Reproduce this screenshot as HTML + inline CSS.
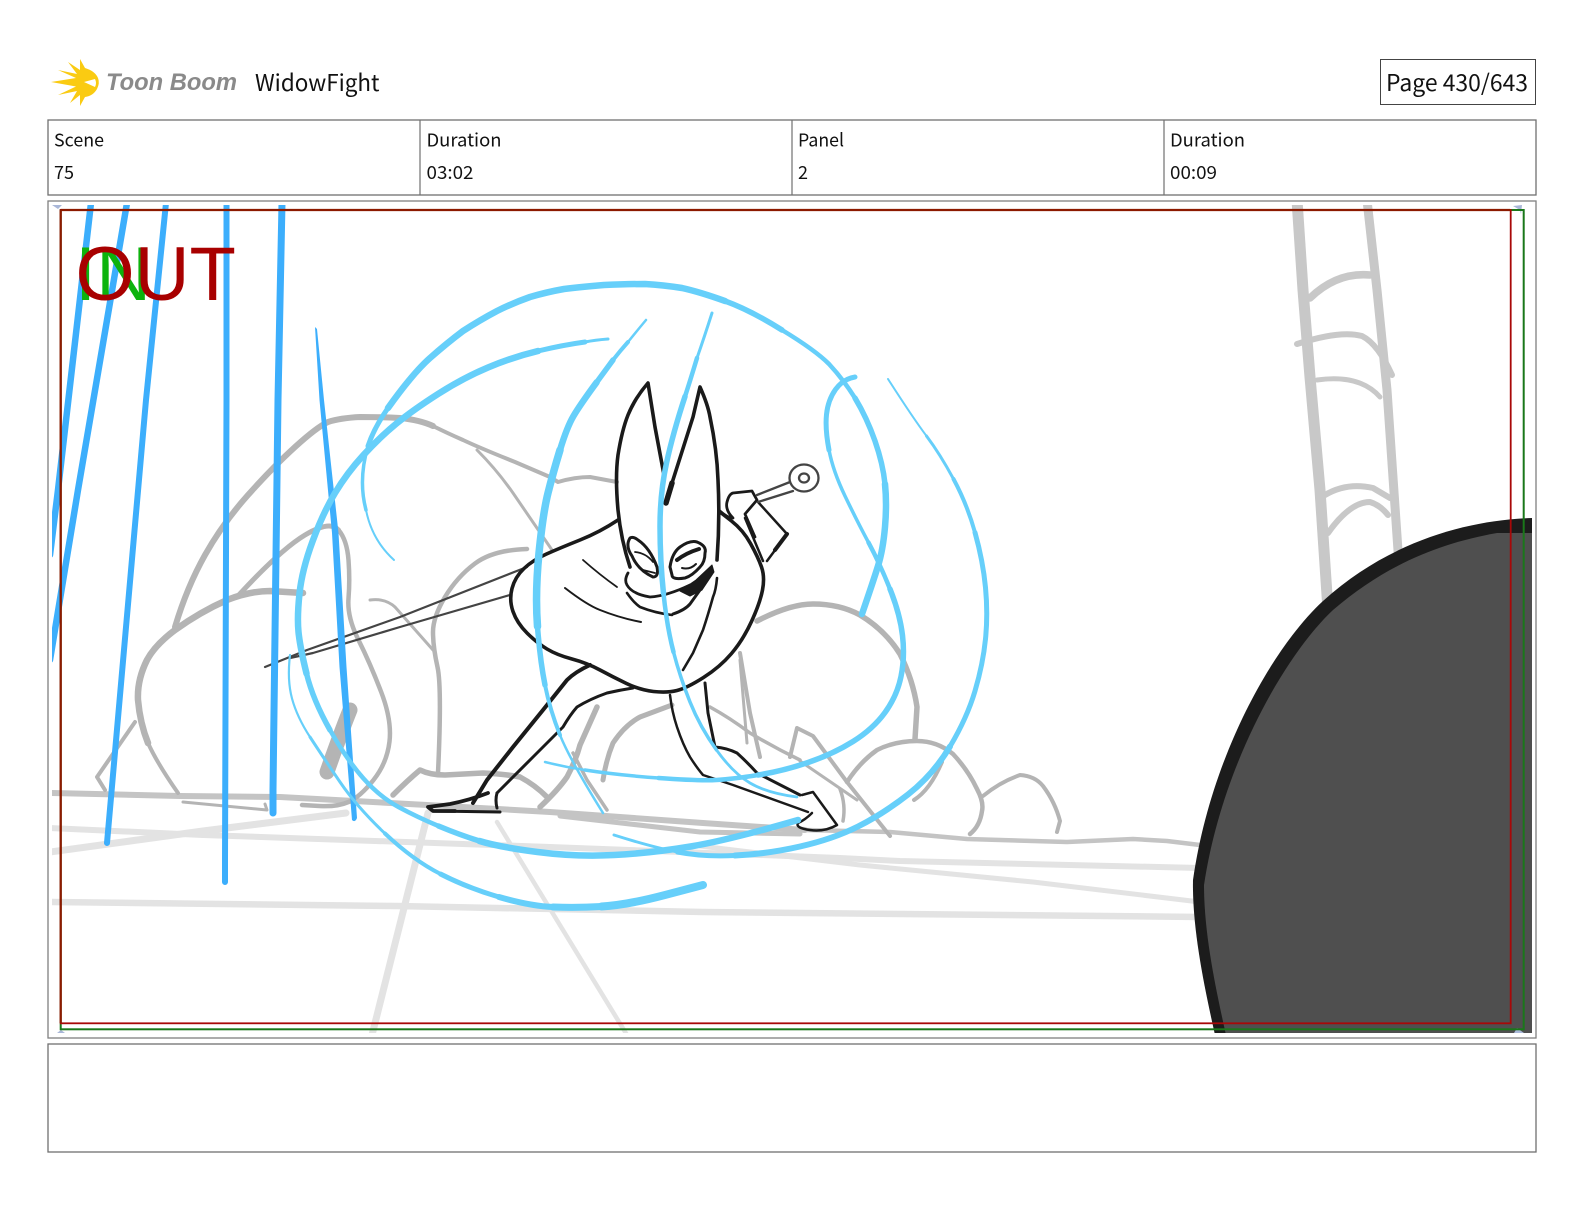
<!DOCTYPE html>
<html><head><meta charset="utf-8"><title>WidowFight</title>
<style>
html,body{margin:0;padding:0;background:#fff;width:1584px;height:1224px;overflow:hidden}
svg{display:block;position:absolute;left:0;top:0}
text{font-family:"Noto Sans CJK JP","Liberation Sans",sans-serif;fill:#111}
.g path{fill:none;stroke-linecap:round;stroke-linejoin:round}
</style></head><body>
<svg width="1584" height="1224" viewBox="0 0 1584 1224" xmlns="http://www.w3.org/2000/svg">
<defs><clipPath id="c"><rect x="52" y="205" width="1480" height="828"/></clipPath></defs>

<!-- logo -->
<path fill="#FACB12" d="M80,59 L85,68 Q95,71 98,78 Q100,83 97,89 Q93,96 85,97 L80,106 L80,95 L70,103 L77,91 L58,95 L76,86.5 L51,82 L76,78 L58,70 L77,74 L68,62 L80,70 Z"/>
<path fill="#fff" d="M84,82 L95,79 Q97,83 95,87 Z"/>
<text x="106" y="90" font-size="24.5" font-weight="700" font-style="italic" textLength="131" lengthAdjust="spacingAndGlyphs" style="font-family:'Liberation Sans',sans-serif;fill:#8a8a8a">Toon Boom</text>
<text x="255" y="91" font-size="23" textLength="124.5" lengthAdjust="spacingAndGlyphs">WidowFight</text>
<rect x="1380.5" y="59.5" width="155" height="45" fill="none" stroke="#444" stroke-width="1"/>
<text x="1386" y="91" font-size="23" textLength="142" lengthAdjust="spacingAndGlyphs">Page 430/643</text>

<!-- table -->
<rect x="48" y="120" width="1488" height="75" fill="none" stroke="#707070" stroke-width="1.3"/>
<path d="M420,120V195M792,120V195M1164,120V195" stroke="#707070" stroke-width="1.2"/>
<g font-size="18">
<text x="54" y="146.5" textLength="50" lengthAdjust="spacingAndGlyphs">Scene</text>
<text x="54" y="179" textLength="20" lengthAdjust="spacingAndGlyphs">75</text>
<text x="426.5" y="146.5" textLength="75" lengthAdjust="spacingAndGlyphs">Duration</text>
<text x="426.5" y="179" textLength="47" lengthAdjust="spacingAndGlyphs">03:02</text>
<text x="798" y="146.5" textLength="46" lengthAdjust="spacingAndGlyphs">Panel</text>
<text x="798" y="179" textLength="10" lengthAdjust="spacingAndGlyphs">2</text>
<text x="1170" y="146.5" textLength="75" lengthAdjust="spacingAndGlyphs">Duration</text>
<text x="1170" y="179" textLength="47" lengthAdjust="spacingAndGlyphs">00:09</text>
</g>

<!-- frames -->
<rect x="48" y="201" width="1488" height="837" fill="none" stroke="#808080" stroke-width="1.3"/>
<rect x="48" y="1044" width="1488" height="108" fill="none" stroke="#707070" stroke-width="1.3"/>

<g clip-path="url(#c)" class="g">
<!-- light gray ground lines -->
<g stroke="#E3E3E3">
<path stroke-width="7" d="M50,852 L203,831 L346,813"/>
<path stroke-width="6" d="M50,828 L203,835 L550,847 L840,858 L900,861 L1200,868"/>
<path stroke-width="5" d="M700,846 L860,865 L1033,882 L1200,902"/>
<path stroke-width="6.5" d="M50,902 L397,906 L703,912 L1200,917"/>
<path stroke-width="7" stroke-linecap="butt" d="M428,813 L372,1035"/>
<path stroke-width="4.5" stroke-linecap="butt" d="M497,822 L627,1035"/>
</g>
<!-- ground -->
<g stroke="#C4C4C4">
<path stroke-width="6" d="M50,793 L180,796 L280,797 L427,805 L550,812 L703,823 L805,830"/>
<path stroke-width="4.5" d="M805,830 L890,832 L967,839 L1067,842 L1133,839 L1167,841 L1200,845"/>
<path stroke-width="5" d="M560,816 L700,832 L800,834"/>
</g>
<!-- ladder -->
<g stroke="#C8C8C8">
<path stroke-width="11" stroke-linecap="butt" d="M1297,200 L1303,290 L1310,377 L1320,490 L1328,610"/>
<path stroke-width="9" stroke-linecap="butt" d="M1367,200 L1377,290 L1387,390 L1399,565"/>
<path stroke-width="7.5" d="M1310,298 Q1337,272 1370,275"/>
<path stroke-width="6" d="M1297,344 Q1340,330 1362,336 Q1378,344 1392,375"/>
<path stroke-width="5" d="M1317,380 Q1360,374 1380,397"/>
<path stroke-width="6" d="M1325,495 Q1347,482 1373,488 L1390,498"/>
<path stroke-width="6" d="M1328,533 Q1350,502 1370,502 Q1380,505 1388,515"/>
</g>
<!-- gray sketch -->
<g stroke="#B4B4B4">
<path stroke-width="6" d="M175,627 Q187,587 205,555 Q223,523 248,495 Q273,467 295,447 Q317,427 328,422 Q340,418 360,417 Q380,417 400,418 Q420,420 433,426"/>
<path stroke-width="4" d="M433,426 Q447,433 463,440 Q480,448 515,462 L550,477 L558,482 Q575,477 590,477 L617,482"/>
<path stroke-width="3" d="M477,450 Q497,470 513,493 L552,550"/>
<path stroke-width="6.5" d="M148,743 Q140,723 138,700 Q137,680 147,660 Q155,645 175,630 Q200,612 227,600 Q250,591 270,591 L303,593"/>
<path stroke-width="4" d="M178,793 Q157,763 148,743"/>
<path stroke-width="4" d="M135,722 L97,777 L105,790"/>
<path stroke-width="5" d="M237,597 Q280,550 305,535 Q330,520 338.5,530"/>
<path stroke-width="4.5" d="M338.5,530 Q347,540 348.5,560 Q350,580 348.5,598.5 Q347,617 358.5,640 Q370,663 381,691.5 Q392,720 389.5,741.5 Q387,763 373.5,780 Q360,797 348.5,802 Q337,807 319.5,806 L302,805"/>
<path stroke-width="15" d="M350,710 Q340,735 327,772"/>
<path stroke-width="3" d="M183,802 L267,810 L265,804"/>
<path stroke-width="3" d="M370,600 Q385,598 395,607 L433,650"/>
<path stroke-width="4.5" d="M527,549 Q493,550 475,563.5 Q457,577 445,597 Q433,617 433,632 Q433,647 437.5,667 Q442,687 438,773"/>
<path stroke-width="5.5" d="M393,795 Q408,780 420,770 Q430,775 445,775 L483,773 Q505,774 520,777 Q535,785 547,797"/>
<path stroke-width="5.5" d="M540,807 Q558,790 567,777 Q576,760 580,745 L597,707"/>
<path stroke-width="3.5" d="M573,753 L587,780 L607,810"/>
<path stroke-width="5" d="M603,780 Q606,760 613,743 Q625,725 640,717 L672,705"/>
<path stroke-width="3.5" d="M710,707 Q730,718 750,733 Q775,748 800,760"/>
<path stroke-width="4" d="M740,653 L750,713 L760,757"/>
<path stroke-width="3" d="M740,660 L747,743"/>
<path stroke-width="4" d="M790,757 L797,728 L813,736 L847,782 L890,836"/>
<path stroke-width="3" d="M800,761 L857,800"/>
<path stroke-width="3.5" d="M840,789 Q846,805 843,821"/>
<path stroke-width="5.5" d="M757,621 Q790,604 813,604 Q840,604 860,615 Q885,630 900,654 Q913,680 917,707 L915,739"/>
<path stroke-width="4.5" d="M847,782 Q860,762 877,750 Q895,741 917,741 Q937,741 953,754 Q968,770 977,789 Q984,802 982,811 Q980,826 970,834"/>
<path stroke-width="4" d="M983,796 Q1000,782 1020,775 Q1035,776 1043,786 Q1055,802 1060,821 L1057,832"/>
</g>
<path stroke="#B4B4B4" stroke-width="4" d="M914,800 Q930,790 942,762"/>

<!-- sword -->
<path stroke="#444" stroke-width="2.2" d="M265,667 L307,650 L400,617 L527,567"/>
<path stroke="#444" stroke-width="2.2" d="M290,658 L313,653 L400,627 L510,595"/>

<!-- black figure -->
<g stroke="#1a1a1a" stroke-width="3.6">
<path d="M618,520 Q600,532 580,540 Q560,548 546.5,554 Q533,560 524,568.5 Q515,577 512,588.5 Q509,600 513,611.5 Q517,623 527,633 Q537,643 547,649 Q557,655 572,659 Q587,663 600,670 Q613,677 626.5,683.5 Q640,690 653.5,691.5 Q667,693 677,690.5 Q687,688 703.5,677.5 Q720,667 731.5,653.5 Q743,640 751.5,621.5 Q760,603 762.5,590 Q765,577 761.5,567 Q758,557 750.5,543.5 Q743,530 731.5,521 L720,512"/>
<path d="M630,567 Q621,540 618,510 Q615,477 618,455 Q622,430 628,415 Q635,398 648,383 L655,427 L664,475"/>
<path d="M672,483 L693,417 L700,387 Q708,405 710,417 Q717,450 718,480 Q720,520 717,560"/>
<path stroke-width="5.5" d="M666,503 L672,483"/>
<!-- eyes -->
<path stroke-width="3" d="M630,538 Q625,546 632,556 Q638,570 653,577 Q659,577 657,567 Q650,548 638,540 Q633,536 630,538 Z"/>
<path stroke-width="1.8" d="M635,552 Q646,553 653,562 M643,570 L655,573"/>
<path stroke-width="3" d="M670,567 Q672,553 680,547 Q690,540 697,542 Q707,546 705,553 Q705,562 700,567 Q692,576 685,578 Q672,580 672,575 Z"/>
<path stroke-width="4" d="M677,560 Q686,553 699,549"/>
<path stroke-width="2" d="M682,568 Q690,570 696,564"/>
<!-- scarf -->
<path stroke-width="2.8" d="M628,573 Q624,580 627,585 Q632,594 650,597 Q667,596 690,585"/>
<path style="fill:#1a1a1a" stroke-width="1" d="M680,591 L696,580 L712,565 L714,572 L702,590 L690,596 Z"/>
<path stroke-width="2.6" d="M627,593 Q634,603 640,607 Q655,613 672,615"/>
<path stroke-width="3" d="M673,614 Q685,610 690,604 L700,590"/>
<path stroke-width="2.6" d="M717,578 Q716,590 713,597 Q708,615 703,630 L693,653 L683,670"/>
<path stroke-width="1.8" d="M583,560 Q600,575 617,587"/>
<path stroke-width="2" d="M565,588 Q587,605 600,610 Q620,618 641,622"/>
<!-- legs -->
<path stroke-width="4" d="M590,665 Q575,672 567,680 Q555,695 543,710 L513,747 L487,780 L473,803"/>
<path stroke-width="3.8" d="M488,793 Q470,800 450,804 L428,807 L433,811 L455,811"/>
<path stroke-width="3" d="M433,811 L500,812 M497,793 Q495,800 497,808"/>
<path stroke-width="3" d="M633,688 Q620,690 607,693 Q590,699 577,707 Q570,715 563,727 L533,757 L497,793"/>
<path stroke-width="2.5" d="M670,695 Q672,712 677,727 Q683,745 690,757 Q697,768 703,775 Q718,780 733,785 L808,812"/>
<path stroke-width="3" d="M705,683 L708,713 L715,747 Q727,748 737,753 Q747,762 757,773 L800,795"/>
<path stroke-width="2.5" d="M802,795 L813,792 L837,825 Q825,832 810,830 Q795,828 798,823 Q805,820 812,813"/>
<!-- arm -->
<path stroke-width="2.8" d="M720,511 Q728,518 733,518 Q725,510 727,502 Q729,494 733,493 L752,491 L757,500 L745,514 L755,537"/>
<path stroke-width="2.5" d="M758,502 L787,534 L767,561 M745,518 L763,561"/>
<path stroke-width="4" d="M787,534 L775,550"/>
</g>
<!-- key -->
<g stroke="#444" stroke-width="2.3">
<path d="M757,495 L790,482 M758,502 L793,491"/>
<ellipse cx="804" cy="478" rx="14.5" ry="13.5" fill="#fff"/>
<ellipse cx="804" cy="478" rx="5" ry="4.5" fill="#fff"/>
</g>

<!-- dark blue speed lines -->
<g stroke="#3CAEFC" stroke-linecap="butt">
<path stroke-width="6.5" d="M91,203 L58,490 L50,555"/>
<path stroke-width="6.5" d="M127,203 L78,490 L50,660"/>
<path stroke-width="6" d="M166,203 L146,400 L107,843"/>
<path stroke-width="6" stroke-linecap="round" d="M226.5,203 L226.5,400 L225,860 L225,882"/>
<path stroke-width="7" stroke-linecap="round" d="M282,203 L278,400 L273,790 L273,813"/>
</g>
<path style="fill:#3CAEFC" stroke="none" d="M315,327 L317,329 L324,400 L338.5,533 L346.5,667 L357,818 Q355,823 352,820 L339.5,667 L332,533 L319.5,400 Z"/>

<!-- light blue swirl -->
<g stroke="#66CFFA">
<path stroke-width="2" d="M394,560 Q372,540 366,510"/>
<path stroke-width="3.5" d="M366,510 Q358,480 368,446"/>
<path stroke-width="5" d="M368,446 Q374,428 388,408"/>
<path stroke-width="6.5" d="M388,408 Q413,373 430,358 Q447,343 463,331 Q480,320 497,311 Q513,303 530,297 Q547,292 564,289 Q580,287 604,285 Q627,284 645,284 Q663,285 682,288 Q700,292 725,301"/>
<path stroke-width="5.5" d="M725,301 Q750,310 782,330"/>
<path stroke-width="4.5" d="M782,330 Q815,350 829,364 Q843,379 855,398"/>
<path stroke-width="5.5" d="M855,398 Q867,418 875,441 Q883,464 885,484"/>
<path stroke-width="6.5" d="M885,484 Q887,504 885,527 Q883,550 878,566 Q873,582 862,614"/>

<path stroke-width="3" d="M608,339 Q595,340 585,342"/>
<path stroke-width="5" d="M585,342 Q563,345 538,351"/>
<path stroke-width="6.5" d="M538,351 Q513,357 488,367.5 Q463,378 438,394 Q413,410 396.5,423.5 Q380,437 363.5,455 Q347,473 335,493 Q323,513 312.5,541.5 Q302,570 299.5,593.5 Q297,617 298.5,632 Q300,647 306.5,673.5"/>
<path stroke-width="5.5" d="M306.5,673.5 Q313,700 330,730"/>
<path stroke-width="4.5" d="M330,730 Q347,760 363.5,778.5 Q380,797 398.5,807 Q417,817 438.5,826"/>
<path stroke-width="5.5" d="M438.5,826 Q460,835 479.5,841"/>
<path stroke-width="6.5" d="M479.5,841 Q499,847 537.5,852 Q576,857 614,855 Q652,853 690.5,846.5 Q729,840 798,820"/>

<path stroke-width="2.2" d="M290,655 Q287,680 292,698.5 Q297,717 310,737"/>
<path stroke-width="3" d="M310,737 Q323,757 340,782 Q357,807 385,833.5"/>
<path stroke-width="4" d="M385,833.5 Q413,860 440.5,874"/>
<path stroke-width="5" d="M440.5,874 Q468,888 499,897"/>
<path stroke-width="6" d="M499,897 Q530,906 553,907"/>
<path stroke-width="7" d="M553,907 Q576,908 601.5,906.5"/>
<path stroke-width="8" d="M601.5,906.5 Q627,905 665,895 L703,885"/>

<path stroke-width="2.5" d="M646,320 Q636,332 628,342"/>
<path stroke-width="4" d="M628,342 Q620,351 613,360"/>
<path stroke-width="5.5" d="M613,360 L596.5,382.5"/>
<path stroke-width="6.5" d="M596.5,382.5 Q580,405 573.5,416 Q567,427 560,450"/>
<path stroke-width="7.5" d="M560,450 Q553,473 548,493 Q543,513 539,553 Q535,593 537.5,626.5"/>
<path stroke-width="5.5" d="M537.5,626.5 Q540,660 545,685"/>
<path stroke-width="4" d="M545,685 Q550,710 560,735"/>
<path stroke-width="2.5" d="M560,735 Q570,760 603,813"/>

<path stroke-width="3" d="M712,313 Q704,338 697,358"/>
<path stroke-width="4.5" d="M697,358 Q691,378 685,396.5"/>
<path stroke-width="5.5" d="M685,396.5 Q673,433 666.5,463 Q660,493 660,526.5 Q660,560 663.5,593.5"/>
<path stroke-width="4.5" d="M663.5,593.5 Q667,627 673.5,652"/>
<path stroke-width="3.5" d="M673.5,652 Q680,677 690,702 Q700,727 716.5,750"/>
<path stroke-width="2.8" d="M716.5,750 Q733,773 750,783 Q767,793 797,797"/>

<path stroke-width="2" d="M888,379 Q913,418 926.5,436"/>
<path stroke-width="3" d="M926.5,436 Q940,454 953.5,479"/>
<path stroke-width="4" d="M953.5,479 Q967,504 975,532.5"/>
<path stroke-width="5" d="M975,532.5 Q983,561 985.5,587.5 Q988,614 985.5,639 Q983,664 975,691 Q967,718 950,746.5"/>
<path stroke-width="6" d="M950,746.5 Q933,775 908,794.5 Q883,814 858,826.5 Q833,839 800,846.5 Q767,854 735,855.5"/>
<path stroke-width="5" d="M735,855.5 Q703,857 677.5,852"/>
<path stroke-width="3" d="M677.5,852 Q652,847 614,835"/>

<path stroke-width="5" d="M855,377 Q843,379 835.5,389.5 Q828,400 826.5,414.5 Q825,429 829,450"/>
<path stroke-width="3.5" d="M829,450 Q833,471 845,496 Q857,521 868.5,542.5"/>
<path stroke-width="4.5" d="M868.5,542.5 Q880,564 890,589"/>
<path stroke-width="5.5" d="M890,589 Q900,614 902.5,635.5 Q905,657 901,676.5 Q897,696 885,712.5 Q873,729 853,741.5 Q833,754 808,762.5 Q783,771 758,775"/>
<path stroke-width="4.5" d="M758,775 Q733,779 716.5,780 Q700,781 658.5,778"/>
<path stroke-width="3.5" d="M658.5,778 Q617,775 585,770"/>
<path stroke-width="2.5" d="M585,770 Q565,767 545,762"/>
</g>

<!-- black sphere -->
<path style="fill:#1C1C1C" stroke="none" d="M1532,518 C1470,520 1390,540 1323,601 C1270,650 1210,760 1193,880 C1192,930 1205,990 1215,1035 L1532,1035 Z"/>
<path style="fill:#4F4F4F" stroke="none" d="M1532,533 L1497,533 C1440,543 1385,565 1333,610 C1285,655 1222,765 1204,885 C1204,935 1216,990 1226,1035 L1532,1035 Z"/>
</g>

<!-- safe-area rectangles -->
<path d="M1520,210 L1513,206 L1522,205 L1521,214 Z M61,1030 L57,1033 L65,1033 Z M1517,1028 L1524,1033 L1514,1033 Z M52,205 L62,205 L58,209 Z" fill="#A9B7D8"/>
<rect x="60.7" y="210" width="1463" height="819.3" fill="none" stroke="#1A771A" stroke-width="2"/>
<rect x="60.7" y="210" width="1450" height="813.3" fill="none" stroke="#A80808" stroke-width="1.8"/>
<path d="M60.7,210H1510M60.7,210V1023" stroke="#8C1A00" stroke-width="2.2" fill="none"/>

<text x="75" y="300" font-size="76" style="font-family:'Liberation Sans',sans-serif;fill:#0DB30D">IN</text>
<text x="75.5" y="300" font-size="76" style="font-family:'Liberation Sans',sans-serif;fill:#A80000">OUT</text>
</svg>
</body></html>
